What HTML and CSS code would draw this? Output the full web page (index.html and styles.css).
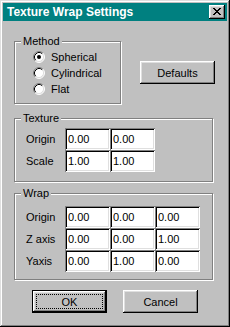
FILE: index.html
```html
<!DOCTYPE html>
<html lang="en">
<head>
  <meta charset="UTF-8">
  <title>Texture Wrap Settings</title>
  <link rel="stylesheet" href="styles.css">
</head>
<body>
  <div class="window">
    <div class="titlebar">
      <span class="title">Texture Wrap Settings</span>
      <span class="close">
        <svg width="8" height="7" viewBox="0 0 8 7" shape-rendering="crispEdges">
          <path d="M0 0h2v1h-2zM6 0h2v1h-2zM1 1h2v1h-2zM5 1h2v1h-2zM2 2h4v1h-4zM3 3h2v1h-2zM2 4h4v1h-4zM1 5h2v1h-2zM5 5h2v1h-2zM0 6h2v1h-2zM6 6h2v1h-2z" fill="#000"/>
        </svg>
      </span>
    </div>

    <div class="client">
      <div class="top-row">
        <fieldset class="group method">
          <legend>Method</legend>
          <div class="radios">
            <label class="radio">
              <svg width="12" height="12" viewBox="0 0 12 12">
                <circle cx="6" cy="6" r="5" fill="#fff"/>
                <path d="M2.11 9.89A5.5 5.5 0 0 1 9.89 2.11" fill="none" stroke="#808080"/>
                <path d="M9.89 2.11A5.5 5.5 0 0 1 2.11 9.89" fill="none" stroke="#fff"/>
                <path d="M2.82 9.18A4.5 4.5 0 0 1 9.18 2.82" fill="none" stroke="#000"/>
                <path d="M9.18 2.82A4.5 4.5 0 0 1 2.82 9.18" fill="none" stroke="#dfdfdf"/>
                <circle cx="6" cy="6" r="2" fill="#000"/>
              </svg>
              <span>Spherical</span>
            </label>
            <label class="radio">
              <svg width="12" height="12" viewBox="0 0 12 12">
                <circle cx="6" cy="6" r="5" fill="#fff"/>
                <path d="M2.11 9.89A5.5 5.5 0 0 1 9.89 2.11" fill="none" stroke="#808080"/>
                <path d="M9.89 2.11A5.5 5.5 0 0 1 2.11 9.89" fill="none" stroke="#fff"/>
                <path d="M2.82 9.18A4.5 4.5 0 0 1 9.18 2.82" fill="none" stroke="#000"/>
                <path d="M9.18 2.82A4.5 4.5 0 0 1 2.82 9.18" fill="none" stroke="#dfdfdf"/>
              </svg>
              <span>Cylindrical</span>
            </label>
            <label class="radio">
              <svg width="12" height="12" viewBox="0 0 12 12">
                <circle cx="6" cy="6" r="5" fill="#fff"/>
                <path d="M2.11 9.89A5.5 5.5 0 0 1 9.89 2.11" fill="none" stroke="#808080"/>
                <path d="M9.89 2.11A5.5 5.5 0 0 1 2.11 9.89" fill="none" stroke="#fff"/>
                <path d="M2.82 9.18A4.5 4.5 0 0 1 9.18 2.82" fill="none" stroke="#000"/>
                <path d="M9.18 2.82A4.5 4.5 0 0 1 2.82 9.18" fill="none" stroke="#dfdfdf"/>
              </svg>
              <span>Flat</span>
            </label>
          </div>
        </fieldset>
        <button type="button" class="btn defaults">Defaults</button>
      </div>

      <fieldset class="group texture">
        <legend>Texture</legend>
        <div class="fields two">
          <span class="row-label">Origin</span>
          <input type="text" value="0.00">
          <input type="text" value="0.00">
          <span class="row-label">Scale</span>
          <input type="text" value="1.00">
          <input type="text" value="1.00">
        </div>
      </fieldset>

      <fieldset class="group wrap">
        <legend>Wrap</legend>
        <div class="fields three">
          <span class="row-label">Origin</span>
          <input type="text" value="0.00">
          <input type="text" value="0.00">
          <input type="text" value="0.00">
          <span class="row-label">Z axis</span>
          <input type="text" value="0.00">
          <input type="text" value="0.00">
          <input type="text" value="1.00">
          <span class="row-label">Yaxis</span>
          <input type="text" value="0.00">
          <input type="text" value="1.00">
          <input type="text" value="0.00">
        </div>
      </fieldset>

      <div class="actions">
        <button type="button" class="btn ok"><span class="focus">OK</span></button>
        <button type="button" class="btn cancel">Cancel</button>
      </div>
    </div>
  </div>
</body>
</html>
```

FILE: styles.css
```css
* {
  box-sizing: border-box;
}
body {
  margin: 0;
  font-family: "Liberation Sans", Arial, sans-serif;
  font-size: 11px;
  color: #000;
}
.window {
  width: 230px;
  height: 327px;
  padding: 3px;
  background-color: #c0c0c0;
  box-shadow: inset -1px -1px #000, inset 1px 1px #dfdfdf, inset -2px -2px #808080, inset 2px 2px #fff;
}
.titlebar {
  height: 18px;
  display: flex;
  align-items: center;
  justify-content: space-between;
  padding-left: 4px;
  background-color: #008080;
  color: #fff;
  font-size: 12px;
  font-weight: bold;
}
.close {
  width: 16px;
  height: 14px;
  margin-right: 2px;
  padding-bottom: 1px;
  display: flex;
  align-items: center;
  justify-content: center;
  background-color: #c0c0c0;
  box-shadow: inset -1px -1px #000, inset 1px 1px #fff, inset -2px -2px #808080, inset 2px 2px #dfdfdf;
}
.close svg {
  display: block;
}
.client {
  padding: 14px 0 0 11px;
}
.top-row {
  display: flex;
  align-items: flex-start;
}

/* group boxes */
.group {
  margin: 0;
  padding: 0;
  min-width: 0;
  border: 1px solid #808080;
  box-shadow: inset 1px 1px #fff, 1px 1px #fff;
}
.group legend {
  margin-left: 6px;
  padding: 0 2px;
  line-height: 13px;
  background-color: #c0c0c0;
}
.method {
  width: 107px;
}
.texture {
  width: 199px;
  margin-top: 8px;
}
.wrap {
  width: 199px;
  margin-top: 5px;
}

/* radios */
.radios {
  padding: 1px 0 6px 18px;
}
.radio {
  height: 16px;
  display: flex;
  align-items: center;
  gap: 6px;
}
.radio svg {
  display: block;
}

/* number fields */
.fields {
  display: grid;
  grid-auto-rows: 22px;
  padding-left: 11px;
}
.fields.two {
  grid-template-columns: 39px 45px 45px;
  padding-top: 3px;
  padding-bottom: 9px;
}
.fields.three {
  grid-template-columns: 39px 45px 45px 45px;
  padding-top: 6px;
  padding-bottom: 7px;
}
.row-label {
  align-self: center;
}
.fields input {
  width: 45px;
  height: 22px;
  margin: 0;
  padding: 0 0 0 3px;
  border: 0;
  outline: none;
  background-color: #fff;
  font: inherit;
  color: #000;
  box-shadow: inset 1px 1px #808080, inset -1px -1px #fff, inset 2px 2px #000, inset -2px -2px #dfdfdf;
}

/* buttons */
.btn {
  width: 75px;
  height: 23px;
  margin: 0;
  padding: 0;
  border: 0;
  background-color: #c0c0c0;
  font: inherit;
  color: #000;
  box-shadow: inset -1px -1px #000, inset 1px 1px #fff, inset -2px -2px #808080, inset 2px 2px #dfdfdf;
}
.defaults {
  margin-left: 19px;
  margin-top: 26px;
}
.actions {
  display: flex;
  margin-top: 10px;
}
.ok {
  margin-left: 18px;
  padding: 3px;
  border: 1px solid #000;
  display: flex;
}
.ok .focus {
  flex: 1;
  display: flex;
  align-items: center;
  justify-content: center;
  border: 1px dotted #000;
}
.cancel {
  margin-left: 16px;
}
```
